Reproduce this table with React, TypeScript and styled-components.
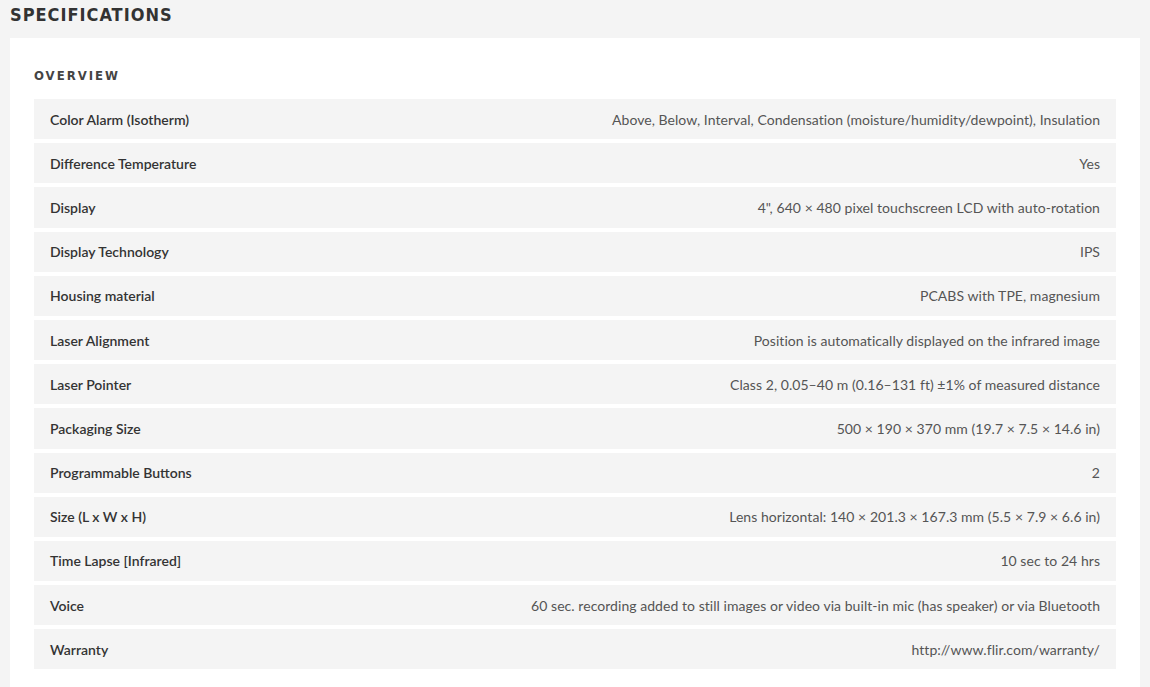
import styled, { createGlobalStyle } from "styled-components";

const GlobalStyle = createGlobalStyle`
	html, body {
		margin: 0;
		padding: 0;
		background: #f4f4f4;
	}
	body {
		font-family: "Lato", "Open Sans", sans-serif;
	}
`;

const specs: [string, string][] = [
	["Color Alarm (Isotherm)", "Above, Below, Interval, Condensation (moisture/humidity/dewpoint), Insulation"],
	["Difference Temperature", "Yes"],
	["Display", "4\", 640 × 480 pixel touchscreen LCD with auto-rotation"],
	["Display Technology", "IPS"],
	["Housing material", "PCABS with TPE, magnesium"],
	["Laser Alignment", "Position is automatically displayed on the infrared image"],
	["Laser Pointer", "Class 2, 0.05–40 m (0.16–131 ft) ±1% of measured distance"],
	["Packaging Size", "500 × 190 × 370 mm (19.7 × 7.5 × 14.6 in)"],
	["Programmable Buttons", "2"],
	["Size (L x W x H)", "Lens horizontal: 140 × 201.3 × 167.3 mm (5.5 × 7.9 × 6.6 in)"],
	["Time Lapse [Infrared]", "10 sec to 24 hrs"],
	["Voice", "60 sec. recording added to still images or video via built-in mic (has speaker) or via Bluetooth"],
	["Warranty", "http://www.flir.com/warranty/"],
];

const Page = styled.div`
	padding: 0 10px;
	height: 687px;
	overflow: hidden;
`;

const Heading = styled.h1`
	margin: 0;
	padding: 4px 0 0 0;
	height: 38px;
	box-sizing: border-box;
	font-family: "DejaVu Sans Condensed", "DejaVu Sans", sans-serif;
	font-stretch: condensed;
	font-weight: bold;
	font-size: 18px;
	line-height: 22px;
	letter-spacing: 1px;
	color: #333;
`;

const Card = styled.section`
	background: #fff;
	padding: 29px 24px 24px;
	min-height: 700px;
`;

const SectionTitle = styled.h2`
	margin: 0 0 14px;
	font-family: "DejaVu Sans Condensed", "DejaVu Sans", sans-serif;
	font-stretch: condensed;
	font-weight: bold;
	font-size: 13px;
	letter-spacing: 2px;
	color: #444;
	line-height: 18px;
`;

const Rows = styled.div`
	display: flex;
	flex-direction: column;
	gap: 4px;
`;

const Row = styled.div`
	display: flex;
	align-items: center;
	justify-content: space-between;
	height: 40.2px;
	padding: 0 16px;
	background: #f4f4f4;
	font-size: 14px;
`;

const Label = styled.span`
	font-weight: 600;
	color: #333;
`;

const Value = styled.span`
	color: #555;
	text-align: right;
	letter-spacing: 0.05px;
`;

export default function App() {
	return (
		<Page>
			<GlobalStyle />
			<Heading>SPECIFICATIONS</Heading>
			<Card>
				<SectionTitle>OVERVIEW</SectionTitle>
				<Rows>
					{specs.map(([label, value]) => (
						<Row key={label}>
							<Label>{label}</Label>
							<Value>{value}</Value>
						</Row>
					))}
				</Rows>
			</Card>
		</Page>
	);
}
